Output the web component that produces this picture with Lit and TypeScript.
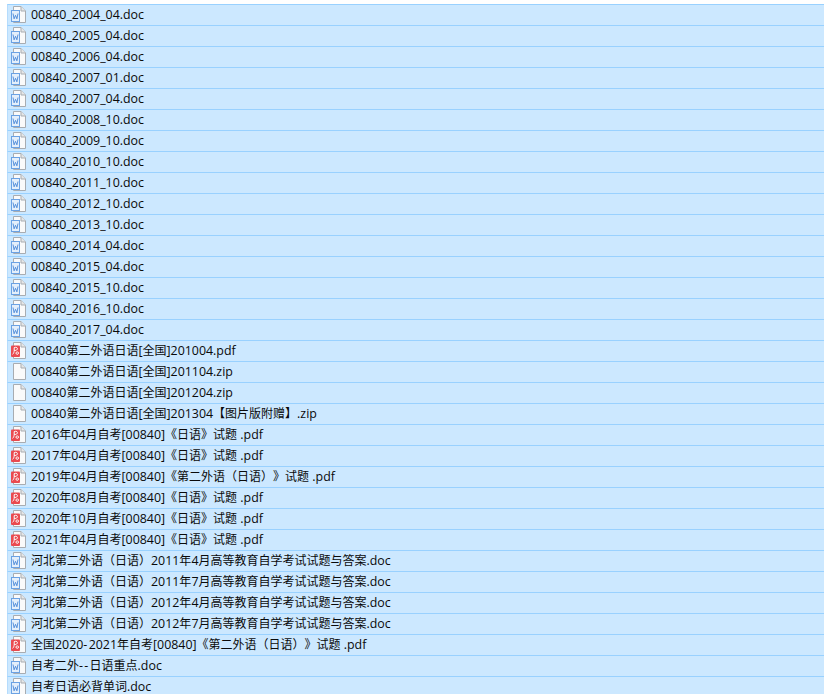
import { LitElement, html, css, svg } from "lit";
import { customElement } from "lit/decorators.js";

type Kind = "doc" | "pdf" | "zip";
const f = (name: string): [Kind, string] => [
  name.endsWith(".pdf") ? "pdf" : name.endsWith(".zip") ? "zip" : "doc",
  name,
];
const FILES = [
  "00840_2004_04.doc","00840_2005_04.doc","00840_2006_04.doc","00840_2007_01.doc","00840_2007_04.doc",
  "00840_2008_10.doc","00840_2009_10.doc","00840_2010_10.doc","00840_2011_10.doc","00840_2012_10.doc",
  "00840_2013_10.doc","00840_2014_04.doc","00840_2015_04.doc","00840_2015_10.doc","00840_2016_10.doc",
  "00840_2017_04.doc","00840第二外语日语[全国]201004.pdf","00840第二外语日语[全国]201104.zip",
  "00840第二外语日语[全国]201204.zip","00840第二外语日语[全国]201304【图片版附赠】.zip",
  "2016年04月自考[00840]《日语》试题 .pdf","2017年04月自考[00840]《日语》试题 .pdf",
  "2019年04月自考[00840]《第二外语（日语）》试题 .pdf","2020年08月自考[00840]《日语》试题 .pdf",
  "2020年10月自考[00840]《日语》试题 .pdf","2021年04月自考[00840]《日语》试题 .pdf",
  "河北第二外语（日语）2011年4月高等教育自学考试试题与答案.doc","河北第二外语（日语）2011年7月高等教育自学考试试题与答案.doc",
  "河北第二外语（日语）2012年4月高等教育自学考试试题与答案.doc","河北第二外语（日语）2012年7月高等教育自学考试试题与答案.doc",
  "全国2020-2021年自考[00840]《第二外语（日语）》试题 .pdf","自考二外--日语重点.doc","自考日语必背单词.doc",
].map(f);

const page = svg`<path d="M3.5 .5H11L15.5 5V16.5H3.5Z" fill="#fafafa" stroke="#a8acb1"/><path d="M11 .5V5H15.5" fill="#e6e6e6" stroke="#a8acb1"/>`;
const icons: Record<Kind, unknown> = {
  zip: page,
  doc: svg`${page}<rect x="1.5" y="4.5" width="8" height="11" fill="#e4effb" stroke="#6ba2e4"/><path d="M3 7.5L4.1 12.8L5.5 9.3L6.9 12.8L8 7.5" fill="none" stroke="#4a88d8" stroke-width=".9"/>`,
  pdf: svg`${page}<rect x="1" y="3.5" width="9" height="11.5" rx="1" fill="#ea4a50"/><path d="M4.2 8.4V5.6C6.4 4.6 8 6 7.2 7.4C6.6 8.4 5.4 8.6 4.2 8.4C4.2 10 3.6 11.4 2.6 12.4M5.8 11C6.2 9.6 8.8 9.6 8.6 11.2C8.4 12.8 6 12.6 5.8 11Z" fill="none" stroke="#fff" stroke-width="1"/>`,
};

const parts = (s: string) =>
  s.split(/([^\x00-\x7f]+|-+)/).map((p, i) =>
    i % 2 ? html`<span class=${p[0] === "-" ? "hy" : "cjk"}>${p}</span>` : p);

@customElement("app-root")
export class AppRoot extends LitElement {
  static styles = css`
    :host { display: block; width: 824px; height: 694px; background: #fff; overflow: hidden;
      font-family: "Open Sans", "Noto Sans CJK SC", sans-serif; color: #0a0a0a; text-spacing-trim: space-all; }
    .list { padding: 4px 0 0 7px; display: flex; flex-direction: column; }
    .row { height: 20px; border-top: 1px solid #99d1ff; border-left: 1px solid #b5dcfd; background: #cce8ff;
      display: flex; align-items: center; gap: 5px; padding-left: 2px; white-space: nowrap; flex: none; }
    svg { width: 16px; height: 17px; flex: none; margin-bottom: 1px; }
    .name { font-size: 12.4px; line-height: 20px; }
    .cjk { font-size: 12px; font-feature-settings: "palt" 0, "chws" 0; }
    .hy { letter-spacing: 1.3px; }
  `;
  render() {
    return html`<div class="list">${FILES.map(([k, n]) => html`<div class="row">
      <svg viewBox="0 0 16 17">${icons[k]}</svg><span class="name">${parts(n)}</span></div>`)}</div>`;
  }
}
